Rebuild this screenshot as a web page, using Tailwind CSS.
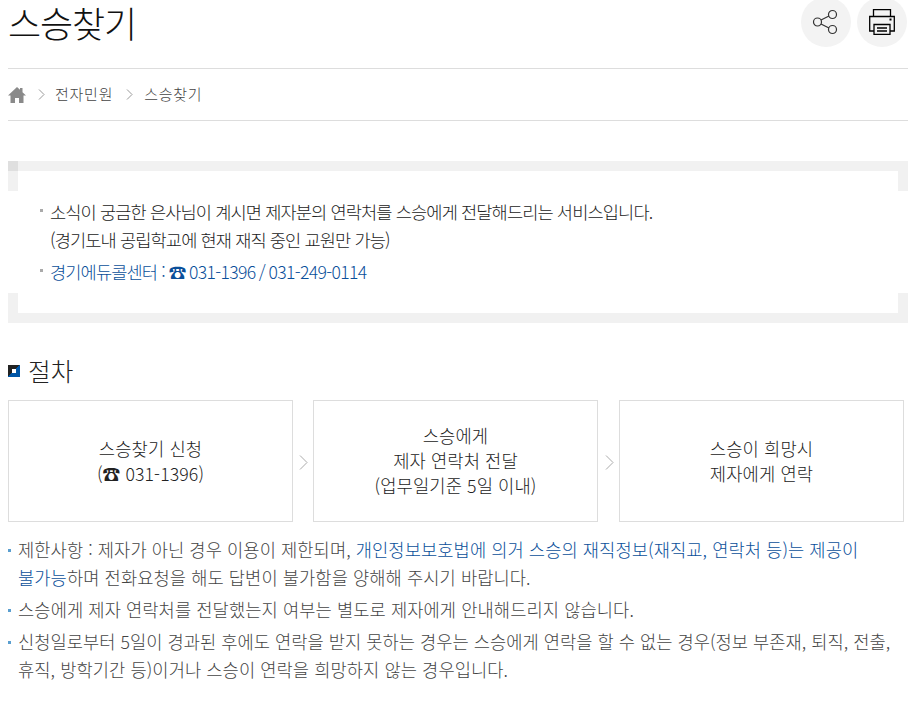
<!DOCTYPE html>
<html lang="ko"><head><meta charset="utf-8"><title>스승찾기</title><script src="https://cdn.jsdelivr.net/npm/@tailwindcss/browser@4"></script></head>
<body class="bg-white overflow-hidden h-[702px] font-light font-['Noto_Sans_CJK_KR','Noto_Sans','DejaVu_Sans',sans-serif] text-[#333]">
<div class="w-[900px] ml-2">

<header class="flex justify-between h-[69px] border-b border-[#ddd]">
  <h1 class="text-[36px] font-light leading-[44px] tracking-[-1.1px] text-[#111]">스승찾기</h1>
  <div class="flex gap-[6px] -mt-[3px] pr-[1px] h-[50px]">
    <div class="w-[50px] h-[50px] rounded-full bg-[#f3f3f3] flex items-center justify-center">
      <svg class="-ml-[2px] -mt-[1px]" width="26" height="26" viewBox="0 0 26 26" fill="none" stroke="#333" stroke-width="1.2"><circle cx="5.500" cy="13" r="4"/><circle cx="20.500" cy="5.500" r="4"/><circle cx="20.500" cy="20.500" r="4"/><path d="M9 11 17 7M9 15l8 4"/></svg>
    </div>
    <div class="w-[50px] h-[50px] rounded-full bg-[#f3f3f3] flex items-center justify-center">
      <svg class="-mt-[1px]" width="26" height="26" viewBox="0 0 26 26" fill="none" stroke="#000" stroke-width="1.3"><path d="M4.500 7.500V.7h17v6.800"/><path d="M5 22H.7V7.500h24.600V22H21"/><path d="M5 15.500h16v9.800H5z" fill="#f3f3f3"/><path d="M8 19h10M8 22h10"/><rect x="20.500" y="9.500" width="2" height="2" fill="#000" stroke="none"/></svg>
    </div>
  </div>
</header>

<nav class="flex items-center h-[52px] border-b border-[#ddd] text-[15px] text-[#444]">
  <svg width="18" height="16" viewBox="0 0 18 16" fill="#8a8a8a"><path d="M9 0 0 8.500h2.500V16h4.500v-5h4v5h4.500V8.500H18L14.500 5.200V1h-2.500v1.800z"/></svg>
  <svg class="ml-[12px]" width="7" height="11" viewBox="0 0 7 11" fill="none" stroke="#999"><path d="m1 .5 5 5-5 5"/></svg>
  <span class="ml-[10px] tracking-[0.75px]">전자민원</span>
  <svg class="ml-[13px]" width="7" height="11" viewBox="0 0 7 11" fill="none" stroke="#999"><path d="m1 .5 5 5-5 5"/></svg>
  <span class="ml-[11px] tracking-[0.75px]">스승찾기</span>
</nav>

<section class="relative mt-10 h-[162px] flex flex-col justify-center pl-[32px] text-[17.6px] leading-[28px] tracking-[-0.88px] text-[#222]">
  <div class="absolute left-0 top-0 w-full h-[10px] bg-[#f1f1f1]"></div>
  <div class="absolute left-0 top-0 w-[10px] h-[30px] bg-[#f1f1f1]"></div>
  <div class="absolute left-0 top-0 w-[10px] h-[10px] bg-[#dfdfdf]"></div>
  <div class="absolute right-0 top-0 w-[10px] h-[30px] bg-[#f1f1f1]"></div>
  <div class="absolute left-0 bottom-0 w-full h-[10px] bg-[#f1f1f1]"></div>
  <div class="absolute left-0 bottom-0 w-[10px] h-[30px] bg-[#f1f1f1]"></div>
  <div class="absolute right-0 bottom-0 w-[10px] h-[30px] bg-[#f1f1f1]"></div>
  <div class="flex"><span class="w-[3px] h-[3px] mt-[11px] mr-[7px] shrink-0 bg-[#aaa]"></span><p>소식이 궁금한 은사님이 계시면 제자분의 연락처를 스승에게 전달해드리는 서비스입니다.<br><span>(경기도내 공립학교에 현재 재직 중인 교원만 가능)</span></p></div>
  <div class="flex mt-1 text-[#0a4f9a]"><span class="w-[3px] h-[3px] mt-[11px] mr-[7px] shrink-0 bg-[#aaa]"></span><p>경기에듀콜센터 : <span class="tracking-[-0.65px] [word-spacing:-1px]">☎ 031-1396 / 031-249-0114</span></p></div>
</section>

<h2 class="flex items-center mt-[29px] h-[36px] text-[24.6px] font-light text-[#222]"><span class="relative w-3 h-3 mt-[2px] mr-2 bg-[linear-gradient(135deg,#222_50%,#0056a6_50%)] flex items-center justify-center"><span class="w-1 h-1 bg-white"></span></span>절차</h2>

<div class="flex mt-[12px] h-[122px] text-[17.7px] tracking-[0.1px] leading-[25px] text-[#222] text-center">
  <div class="w-[285px] border border-[#ddd] flex items-center justify-center"><p>스승찾기 신청<br>(☎ 031-1396)</p></div>
  <div class="w-[20px] flex items-center justify-center"><svg class="ml-[1px] mt-[2px]" width="9" height="15" viewBox="0 0 9 15" fill="none" stroke="#aaa"><path d="m1 .5 7 7-7 7"/></svg></div>
  <div class="w-[285px] border border-[#ddd] flex items-center justify-center"><p class="-mt-[1px]">스승에게<br>제자 연락처 전달<br>(업무일기준 5일 이내)</p></div>
  <div class="w-[21px] flex items-center justify-center"><svg class="ml-[1px] mt-[2px]" width="9" height="15" viewBox="0 0 9 15" fill="none" stroke="#aaa"><path d="m1 .5 7 7-7 7"/></svg></div>
  <div class="w-[285px] border border-[#ddd] flex items-center justify-center"><p>스승이 희망시<br>제자에게 연락</p></div>
</div>

<ul class="mt-[14px] text-[17.65px] leading-[28px] text-[#444]">
  <li class="flex tracking-[0.08px]"><span class="w-[3px] h-[3px] mt-[13px] mr-[7px] shrink-0 bg-[#5a9fd0]"></span><p>제한사항 : 제자가 아닌 경우 이용이 제한되며, <span class="text-[#0a4f9a]">개인정보보호법에 의거 스승의 재직정보(재직교, 연락처 등)는 제공이<br>불가능</span>하며 전화요청을 해도 답변이 불가함을 양해해 주시기 바랍니다.</p></li>
  <li class="flex mt-1 tracking-[0.09px]"><span class="w-[3px] h-[3px] mt-[13px] mr-[7px] shrink-0 bg-[#5a9fd0]"></span><p>스승에게 제자 연락처를 전달했는지 여부는 별도로 제자에게 안내해드리지 않습니다.</p></li>
  <li class="flex mt-1 tracking-[0.03px]"><span class="w-[3px] h-[3px] mt-[13px] mr-[7px] shrink-0 bg-[#5a9fd0]"></span><p>신청일로부터 5일이 경과된 후에도 연락을 받지 못하는 경우는 스승에게 연락을 할 수 없는 경우(정보 부존재, 퇴직, 전출,<br><span class="tracking-[0.08px]">휴직, 방학기간 등)이거나 스승이 연락을 희망하지 않는 경우입니다.</span></p></li>
</ul>
</div>
</body></html>
